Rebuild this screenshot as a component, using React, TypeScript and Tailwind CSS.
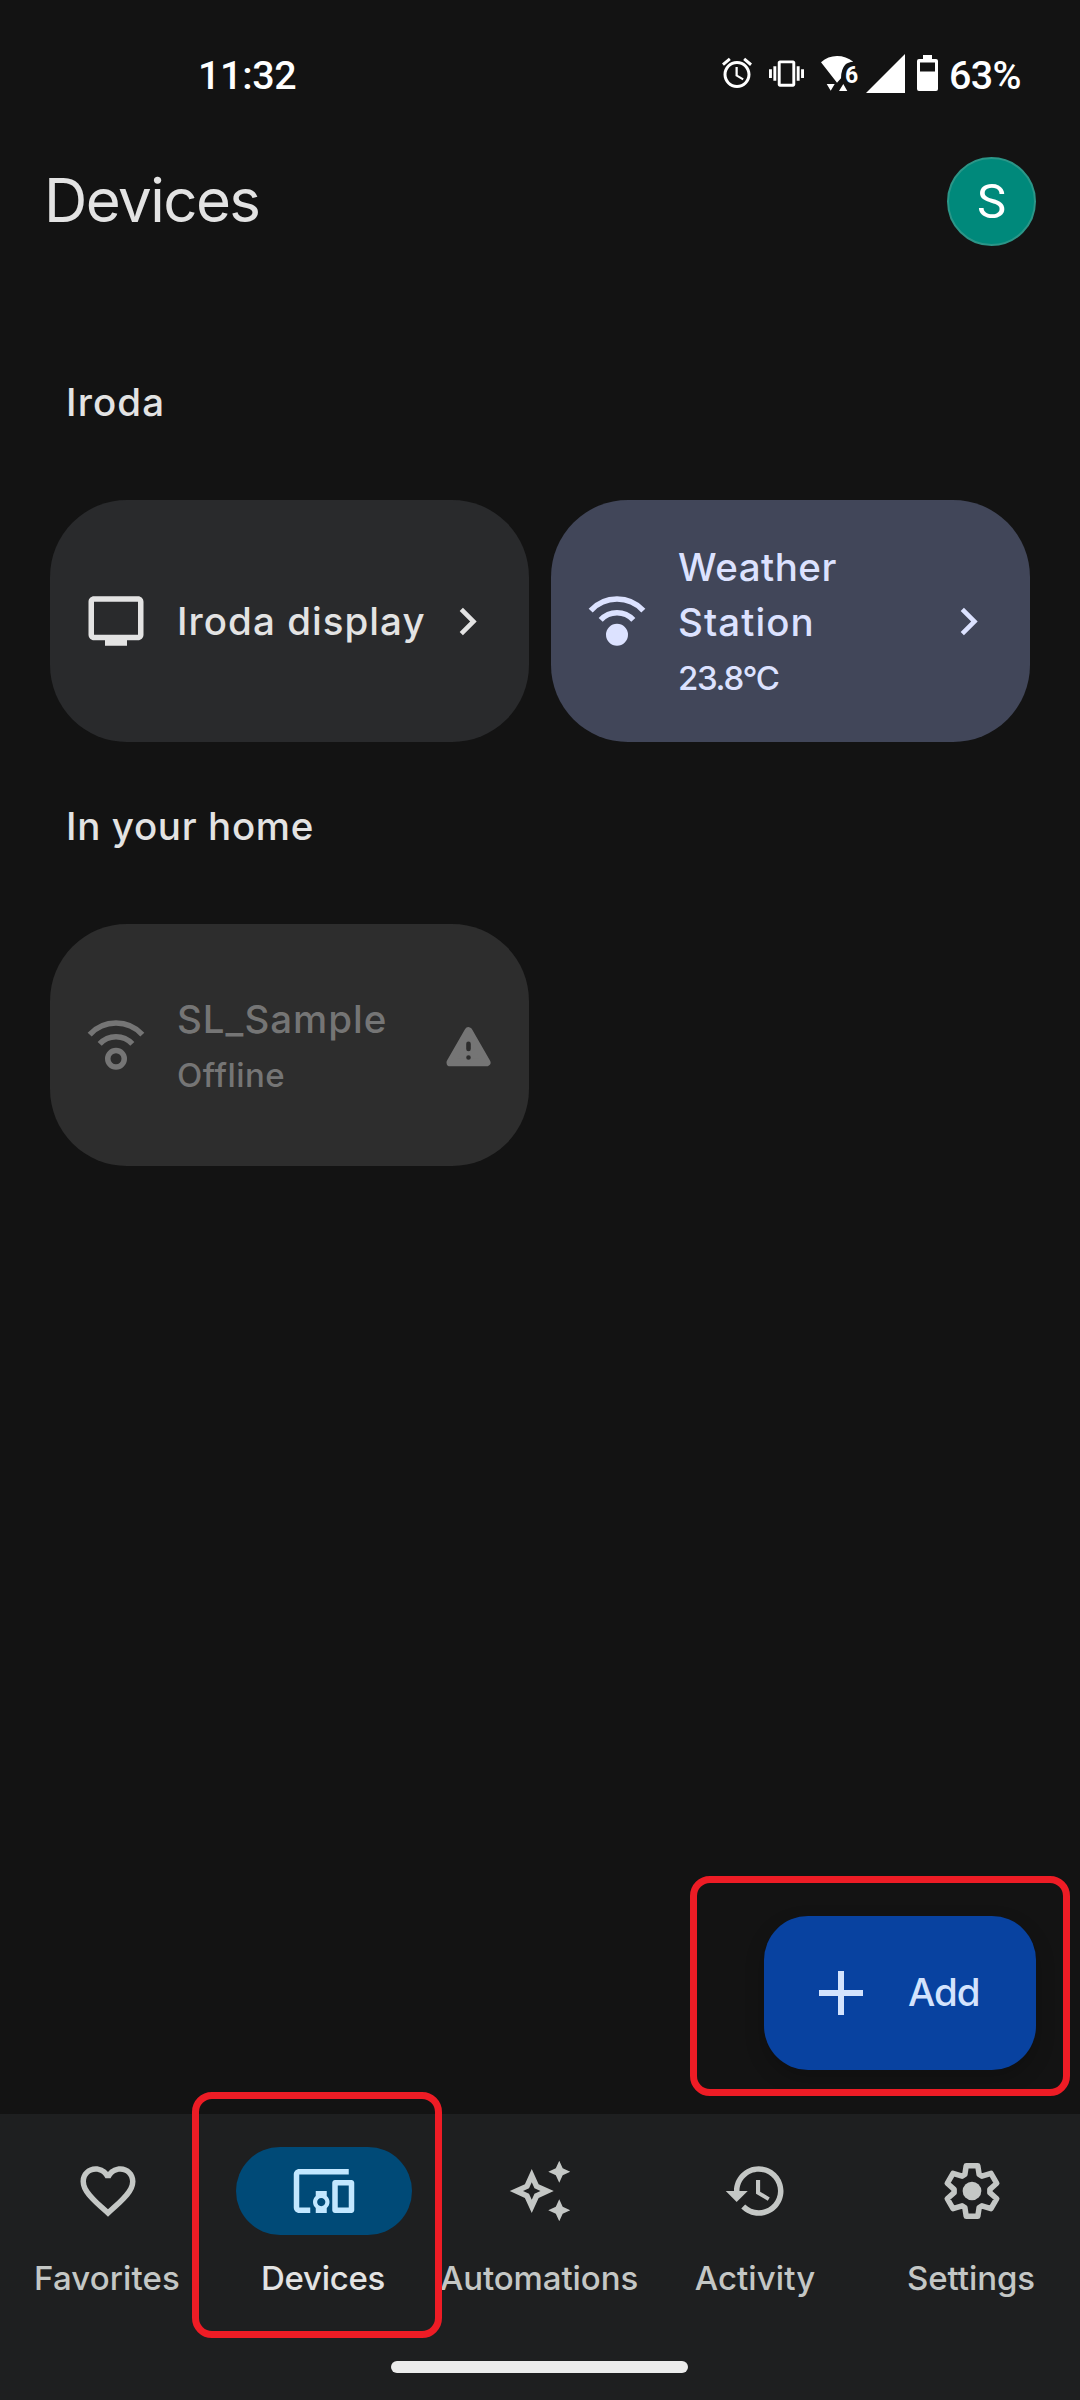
import type { ReactNode } from 'react'

const paths = {
  alarm:
    'M22 5.72l-4.6-3.86-1.29 1.53 4.6 3.86L22 5.72zM7.88 3.39L6.6 1.86 2 5.71l1.29 1.53 4.59-3.85zM12.5 8H11v6l4.75 2.85.75-1.23-4-2.37V8zM12 4c-4.97 0-9 4.03-9 9s4.02 9 9 9c4.97 0 9-4.03 9-9s-4.03-9-9-9zm0 16c-3.87 0-7-3.13-7-7s3.13-7 7-7 7 3.13 7 7-3.13 7-7 7z',
  vibration:
    'M0 15h2V9H0v6zm3 2h2V7H3v10zm19-8v6h2V9h-2zm-3 8h2V7h-2v10zM16.5 3h-9C6.67 3 6 3.67 6 4.5v15c0 .83.67 1.5 1.5 1.5h9c.83 0 1.5-.67 1.5-1.5v-15c0-.83-.67-1.5-1.5-1.5zM16 19H8V5h8v14z',
  display:
    'M20 3H4c-1.1 0-2 .9-2 2v12c0 1.1.9 2 2 2h4v2h8v-2h4c1.1 0 2-.9 2-2V5c0-1.1-.9-2-2-2zm0 14H4V5h16v12z',
  chevron: 'M10 6L8.59 7.41 13.17 12l-4.58 4.59L10 18l6-6z',
  heart:
    'M16.5 3c-1.74 0-3.41.81-4.5 2.09C10.91 3.81 9.24 3 7.5 3 4.42 3 2 5.42 2 8.5c0 3.78 3.4 6.86 8.55 11.54L12 21.35l1.45-1.32C18.6 15.36 22 12.28 22 8.5 22 5.42 19.58 3 16.5 3zm-4.4 15.55l-.1.1-.1-.1C7.14 14.24 4 11.39 4 8.5 4 6.5 5.5 5 7.5 5c1.54 0 3.04.99 3.57 2.36h1.87C13.46 5.99 14.96 5 16.5 5c2 0 3.5 1.5 3.5 3.5 0 2.89-3.14 5.74-7.9 10.05z',
  devices:
    'M3 6h18V4H3c-1.1 0-2 .9-2 2v12c0 1.1.9 2 2 2h4v-2H3V6zm10 6H9v1.78c-.61.55-1 1.33-1 2.22s.39 1.67 1 2.22V20h4v-1.78c.61-.55 1-1.34 1-2.22s-.39-1.67-1-2.22V12zm-2 5.5c-.83 0-1.5-.67-1.5-1.5s.67-1.5 1.5-1.5 1.5.67 1.5 1.5-.67 1.5-1.5 1.5zM22 8h-6c-.5 0-1 .5-1 1v10c0 .5.5 1 1 1h6c.5 0 1-.5 1-1V9c0-.5-.5-1-1-1zm-1 10h-4v-8h4v8z',
  sparkles:
    'M19 9l1.25-2.75L23 5l-2.75-1.25L19 1l-1.25 2.75L15 5l2.75 1.25zM19 15l-1.25 2.75L15 19l2.75 1.25L19 23l1.25-2.75L23 19l-2.75-1.25zM11.5 9.5L9 4 6.5 9.5 1 12l5.5 2.5L9 20l2.5-5.5L17 12l-5.5-2.5zm-1.51 3.49L9 15.17l-.99-2.18L5.83 12l2.18-.99L9 8.83l.99 2.18 2.18.99-2.18.99z',
  history:
    'M13 3c-4.97 0-9 4.03-9 9H1l3.89 3.89.07.14L9 12H6c0-3.87 3.13-7 7-7s7 3.13 7 7-3.13 7-7 7c-1.93 0-3.68-.79-4.94-2.06l-1.42 1.42C8.27 19.99 10.51 21 13 21c4.97 0 9-4.03 9-9s-4.03-9-9-9zm-1 5v5l4.28 2.54.72-1.21-3.5-2.08V8H12z',
}

function Icon({ d, className }: { d: string; className: string }) {
  return (
    <svg viewBox="0 0 24 24" fill="currentColor" className={`shrink-0 ${className}`}>
      <path d={d} fillRule="evenodd" />
    </svg>
  )
}

function SensorIcon({ filled }: { filled?: boolean }) {
  return (
    <svg viewBox="0 0 24 24" fill="none" stroke="currentColor" strokeWidth="2" className="size-[66px] shrink-0">
      <path d="M2.43 8.2A13 13 0 0 1 21.57 8.2M6.07 11.62A8 8 0 0 1 17.93 11.62" />
      <circle cx="12" cy="17" r="3" fill={filled ? 'currentColor' : 'none'} />
    </svg>
  )
}

function WarningIcon() {
  return (
    <svg viewBox="0 0 24 24" className="size-[55px] shrink-0">
      <path
        d="M12 5.7L19.9 19.4H4.1z"
        fill="currentColor"
        stroke="currentColor"
        strokeWidth="3.4"
        strokeLinejoin="round"
      />
      <path d="M12 11.2v2.3M12 17.2v.01" stroke="#2d2d2d" strokeWidth="2" strokeLinecap="round" />
    </svg>
  )
}

function GearIcon() {
  return (
    <svg viewBox="-12 -12 24 24" fill="none" stroke="currentColor" strokeWidth="2" strokeLinejoin="round" className="size-[66px]">
      <path d="M-2.1 -9.2H2.1L2.6 -6L3.6 -5.4L6.9 -6.4L9 -2.8L6.5 -.6V.6L9 2.8L6.9 6.4L3.6 5.4L2.6 6L2.1 9.2H-2.1L-2.6 6L-3.6 5.4L-6.9 6.4L-9 2.8L-6.5 .6V-.6L-9 -2.8L-6.9 -6.4L-3.6 -5.4L-2.6 -6z" />
      <circle r="3.4" fill="currentColor" stroke="none" />
    </svg>
  )
}

function StatusBar() {
  return (
    <div className="flex h-[150px] items-center justify-between pr-[58px] pl-[198px] font-['Roboto',sans-serif] text-[39.4px] font-medium text-white">
      <span className="pt-px tracking-[-0.31px]">11:32</span>
      <div className="flex items-center">
        <Icon d={paths.alarm} className="mr-[14px] mb-[3px] size-9" />
        <Icon d={paths.vibration} className="mr-[16px] mb-[3px] size-[35px]" />
        <svg viewBox="0 0 38 38" fill="currentColor" className="mr-[8px] mb-[4px] size-[38px]">
          <path d="M1 8.3Q8 2 17 2T33.3 7.7Q28 8 25.2 10.8Q21 15.5 21 24.3L17 28.7z" />
          <path d="M6.7 30h8l-4 6.7zM19 37h8.3l-4-7z" />
          <text x="25" y="28.6" fontSize="23" fontWeight="700">6</text>
        </svg>
        <svg viewBox="0 0 39 39" fill="currentColor" className="mr-[12px] mb-[3px] size-[39px]">
          <path d="M39 0V39H0z" />
        </svg>
        <svg viewBox="0 0 21 36" fill="currentColor" className="mr-[11px] mb-[3px] h-9 w-[21px]">
          <path
            fillRule="evenodd"
            d="M6 0h9v4h4a2 2 0 0 1 2 2v28a2 2 0 0 1-2 2H2a2 2 0 0 1-2-2V6a2 2 0 0 1 2-2h4zM3 7.5v9h15v-9z"
          />
        </svg>
        <span className="w-[73px] pt-px tracking-[-0.6px]">63%</span>
      </div>
    </div>
  )
}

function Heading({ tracking, children }: { tracking: string; children: ReactNode }) {
  return (
    <h2 className={`flex h-[182px] items-center pb-[13px] pl-[66px] text-[38.5px] font-medium ${tracking}`}>{children}</h2>
  )
}

const navItems = [
  { label: 'Favorites', tracking: 'tracking-[0.12px]', icon: <Icon d={paths.heart} className="size-[66px]" /> },
  { label: 'Devices', tracking: 'tracking-[-0.26px]', active: true, icon: <Icon d={paths.devices} className="size-[66px]" /> },
  { label: 'Automations', tracking: 'tracking-[-0.1px]', icon: <Icon d={paths.sparkles} className="size-[66px]" /> },
  { label: 'Activity', tracking: 'tracking-[0.1px]', icon: <Icon d={paths.history} className="size-[66px]" /> },
  { label: 'Settings', tracking: 'tracking-[-0.1px]', icon: <GearIcon /> },
]

export default function App() {
  return (
    <div className="relative flex h-[2400px] w-[1080px] flex-col overflow-hidden bg-[#131313] font-['Inter',sans-serif] text-[#e3e3e3]">
      <StatusBar />
      <header className="flex h-[103px] items-center justify-between pr-[44px] pl-[44px]">
        <h1 className="pb-[3px] text-[60px] leading-none tracking-[-1.55px]">Devices</h1>
        <div className="flex size-[89px] items-center justify-center rounded-full border-2 border-[#2b9688] bg-[#00897b] font-['Roboto',sans-serif] text-[49px] leading-none text-white">
          S
        </div>
      </header>

      <main className="mt-[65px] flex-1">
        <Heading tracking="tracking-[1.15px]">Iroda</Heading>
        <div className="flex gap-[22px] px-[50px]">
          <div className="flex h-[242px] w-[479px] items-center rounded-[77px] bg-[#292a2c] pr-[34px] pl-[33px]">
            <Icon d={paths.display} className="size-[66px]" />
            <span className="ml-[28px] flex-1 text-[38.5px] leading-[55px] font-medium tracking-[1.05px] whitespace-nowrap">
              Iroda display
            </span>
            <Icon d={paths.chevron} className="size-[55px]" />
          </div>
          <div className="flex h-[242px] w-[479px] items-center rounded-[77px] bg-[#414659] pr-[34px] pl-[33px] text-[#dce2ff]">
            <SensorIcon filled />
            <div className="ml-[28px] flex-1 pt-[4px] font-medium">
              <div className="text-[38.5px] leading-[55px] tracking-[0.5px]">Weather</div>
              <div className="text-[38.5px] leading-[55px] tracking-[1.09px]">Station</div>
              <div className="text-[33px] leading-[56px] tracking-[-1.34px]">23.8°C</div>
            </div>
            <Icon d={paths.chevron} className="size-[55px]" />
          </div>
        </div>
        <Heading tracking="tracking-[0.65px]">In your home</Heading>
        <div className="flex px-[50px]">
          <div className="flex h-[242px] w-[479px] items-center rounded-[77px] bg-[#2d2d2d] pr-[33px] pl-[33px] text-[#757575]">
            <SensorIcon />
            <div className="ml-[28px] flex-1 pt-[4px] font-medium">
              <div className="text-[38.5px] leading-[55px] tracking-[0.98px]">SL_Sample</div>
              <div className="text-[33px] leading-[56px] tracking-[0.47px]">Offline</div>
            </div>
            <WarningIcon />
          </div>
        </div>
      </main>

      <button className="mr-[44px] mb-[44px] flex h-[154px] w-[272px] items-center self-end rounded-[44px] bg-[#0842a0] pl-[55px] text-[#d3e3fd] shadow-[0_8px_20px_rgba(0,0,0,0.2)]">
        <svg viewBox="0 0 44 44" fill="currentColor" className="size-[44px]">
          <path d="M19 0h6v19h19v6H25v19h-6V25H0v-6h19z" />
        </svg>
        <span className="ml-[45px] pb-[2px] text-[38.5px] leading-none font-medium tracking-[-1px]">Add</span>
      </button>

      <nav className="flex h-[286px] flex-col items-center bg-[#1e1f20]">
        <div className="grid w-full grid-cols-5 pt-[33px]">
          {navItems.map((item) => (
            <div key={item.label} className={`flex flex-col items-center ${item.active ? 'text-[#e3e3e3]' : 'text-[#c4c7c5]'}`}>
              <div
                className={`flex h-[88px] w-[176px] items-center justify-center rounded-full ${item.active ? 'bg-[#004a77] text-[#c2e7ff]' : ''}`}
              >
                {item.icon}
              </div>
              <span className={`mt-[21px] pr-[2px] text-[33px] leading-[44px] font-medium ${item.tracking}`}>{item.label}</span>
            </div>
          ))}
        </div>
        <div className="mt-[61px] mr-[2px] h-[12px] w-[297px] rounded-full bg-[#ececec]" />
      </nav>

      {/* Callouts around the Add button and the Devices tab */}
      <div className="absolute top-[1876px] left-[690px] h-[220px] w-[380px] rounded-[20px] border-[7px] border-[#ee1c25]" />
      <div className="absolute top-[2092px] left-[192px] h-[246px] w-[250px] rounded-[20px] border-[7px] border-[#ee1c25]" />
    </div>
  )
}
